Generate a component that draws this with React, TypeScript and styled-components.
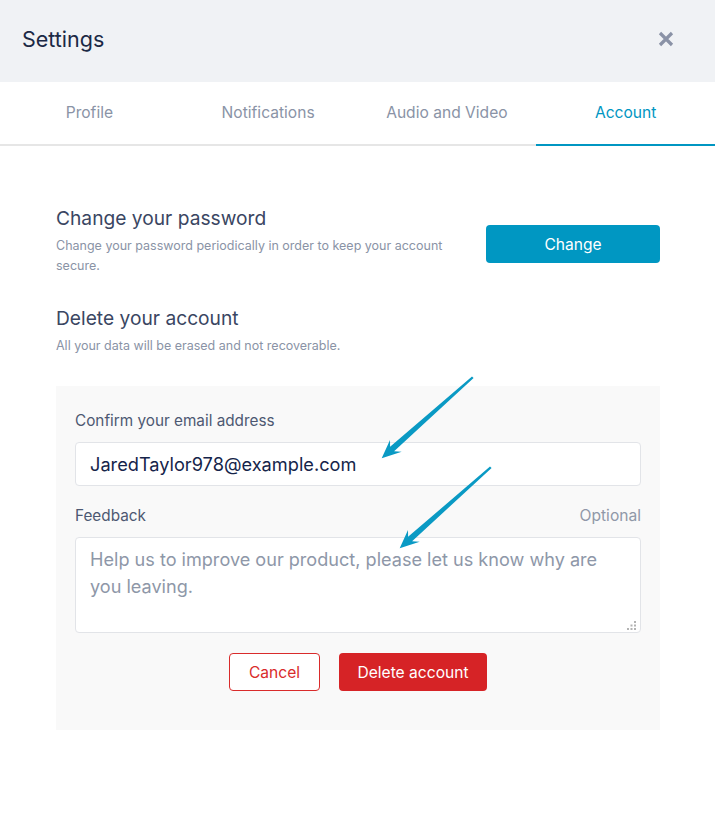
import React from "react";
import styled, { createGlobalStyle } from "styled-components";

const Global = createGlobalStyle`
  html, body { margin: 0; padding: 0; background: #ffffff; }
  body { font-family: Inter, "Noto Sans", Arial, sans-serif; -webkit-font-smoothing: antialiased; }
  * { box-sizing: border-box; }
`;

const Page = styled.div`
  position: relative;
  width: 715px;
  min-height: 814px;
  background: #ffffff;
`;

const Header = styled.header`
  height: 82px;
  background: #f0f2f5;
  display: flex;
  align-items: center;
  justify-content: space-between;
  padding: 0 41px 4px 22px;
`;

const Title = styled.h1`
  margin: 0;
  font-size: 21.5px;
  font-weight: 400;
  color: #1b2945;
  line-height: 26px;
`;

const CloseButton = styled.button`
  border: 0;
  background: transparent;
  padding: 0;
  width: 16px;
  height: 16px;
  display: flex;
  align-items: center;
  justify-content: center;
  cursor: pointer;
`;

const Tabs = styled.nav`
  display: flex;
  height: 64px;
  border-bottom: 2px solid #e6e6e6;
`;

const Tab = styled.div<{ $active?: boolean }>`
  flex: 1;
  display: flex;
  align-items: center;
  justify-content: center;
  font-size: 15.6px;
  color: ${(p) => (p.$active ? "#0096c2" : "#8a93a6")};
  border-bottom: 2px solid ${(p) => (p.$active ? "#0096c2" : "transparent")};
  margin-bottom: -2px;
  padding-bottom: 2px;
`;

const Content = styled.main`
  padding: 60px 55px 0 56px;
`;

const Row = styled.section`
  display: flex;
  justify-content: space-between;
  align-items: flex-start;
`;

const Block = styled.div<{ $top?: number }>`
  margin-top: ${(p) => p.$top ?? 0}px;
`;

const Heading = styled.h2`
  margin: 0;
  font-size: 19.2px;
  font-weight: 400;
  line-height: 24px;
  color: #3a4662;
`;

const Sub = styled.p`
  margin: 6px 0 0;
  max-width: 400px;
  font-size: 12.5px;
  line-height: 20px;
  color: #8a93a6;
`;

const PrimaryButton = styled.button`
  margin-top: 19px;
  width: 174px;
  height: 38px;
  border: 0;
  border-radius: 4px;
  background: #0097c2;
  color: #ffffff;
  font-family: inherit;
  font-size: 15.6px;
  cursor: pointer;
`;

const Panel = styled.div`
  margin-top: 30px;
  background: #f9f9f9;
  padding: 25px 19px 39px;
  display: flex;
  flex-direction: column;
`;

const LabelRow = styled.div<{ $top?: number }>`
  display: flex;
  justify-content: space-between;
  margin-top: ${(p) => p.$top ?? 0}px;
  font-size: 15.3px;
  line-height: 20px;
`;

const Label = styled.label`
  color: #4d5872;
`;

const Hint = styled.span`
  color: #9098a8;
  font-size: 15.6px;
`;

const TextInput = styled.input`
  margin-top: 11px;
  height: 44px;
  border: 1px solid #e2e4e8;
  border-radius: 4px;
  background: #ffffff;
  padding: 0 14px;
  font-family: inherit;
  font-size: 18.2px;
  color: #15244a;
  outline: none;
`;

const FieldBox = styled.div`
  position: relative;
  margin-top: 11px;
  display: flex;
`;

const TextArea = styled.textarea`
  flex: 1;
  height: 96px;
  border: 1px solid #e2e4e8;
  border-radius: 4px;
  background: #ffffff;
  padding: 8px 14px;
  font-family: inherit;
  font-size: 18.1px;
  line-height: 27px;
  color: #15244a;
  outline: none;
  resize: none;
  &::placeholder { color: #8e97a8; }
`;

const Grip = styled.svg`
  position: absolute;
  right: 5px;
  bottom: 3px;
  width: 9px;
  height: 9px;
  pointer-events: none;
`;

const Actions = styled.div`
  margin-top: 20px;
  display: flex;
  justify-content: center;
  gap: 19px;
`;

const OutlineButton = styled.button`
  width: 91px;
  height: 38px;
  border: 1px solid #d92b2b;
  border-radius: 4px;
  background: #ffffff;
  color: #d92b2b;
  font-family: inherit;
  font-size: 15.6px;
  cursor: pointer;
`;

const DangerButton = styled.button`
  width: 148px;
  height: 38px;
  border: 0;
  border-radius: 4px;
  background: #d62326;
  color: #ffffff;
  font-family: inherit;
  font-size: 15.6px;
  cursor: pointer;
`;

const Arrow = styled.svg<{ $x: number; $y: number }>`
  position: absolute;
  left: ${(p) => p.$x}px;
  top: ${(p) => p.$y}px;
  width: 100px;
  height: 88px;
  pointer-events: none;
`;

const ArrowMark = ({ x, y }: { x: number; y: number }) => (
  <Arrow $x={x} $y={y} viewBox="0 0 100 88">
    <polygon
      points="94,2.5 95.6,4 16.1,77.2 23.7,77.8 3.7,84.3 12,66.1 12.1,72.8"
      fill="#0a9ac4"
    />
  </Arrow>
);

export default function App() {
  return (
    <Page>
      <Global />
      <Header>
        <Title>Settings</Title>
        <CloseButton aria-label="Close">
          <svg width="16" height="16" viewBox="0 0 16 16">
            <path d="M2 2 L14 14 M14 2 L2 14" stroke="#8a92a6" strokeWidth="3.2" strokeLinecap="butt" />
          </svg>
        </CloseButton>
      </Header>
      <Tabs>
        <Tab>Profile</Tab>
        <Tab>Notifications</Tab>
        <Tab>Audio and Video</Tab>
        <Tab $active>Account</Tab>
      </Tabs>
      <Content>
        <Row>
          <div>
            <Heading>Change your password</Heading>
            <Sub>Change your password periodically in order to keep your account secure.</Sub>
          </div>
          <PrimaryButton>Change</PrimaryButton>
        </Row>
        <Block $top={30}>
          <Heading>Delete your account</Heading>
          <Sub>All your data will be erased and not recoverable.</Sub>
        </Block>
        <Panel>
          <LabelRow>
            <Label>Confirm your email address</Label>
          </LabelRow>
          <TextInput defaultValue="JaredTaylor978@example.com" />
          <LabelRow $top={20}>
            <Label>Feedback</Label>
            <Hint>Optional</Hint>
          </LabelRow>
          <FieldBox>
            <TextArea placeholder="Help us to improve our product, please let us know why are you leaving." />
            <Grip viewBox="0 0 9 9">
              <g fill="#b3b3b3">
                <rect x="7" y="0" width="2" height="2" />
                <rect x="3.5" y="3.5" width="2" height="2" />
                <rect x="7" y="3.5" width="2" height="2" />
                <rect x="0" y="7" width="2" height="2" />
                <rect x="3.5" y="7" width="2" height="2" />
                <rect x="7" y="7" width="2" height="2" />
              </g>
            </Grip>
          </FieldBox>
          <Actions>
            <OutlineButton>Cancel</OutlineButton>
            <DangerButton>Delete account</DangerButton>
          </Actions>
        </Panel>
      </Content>
      <ArrowMark x={378} y={374} />
      <ArrowMark x={396} y={464} />
    </Page>
  );
}
